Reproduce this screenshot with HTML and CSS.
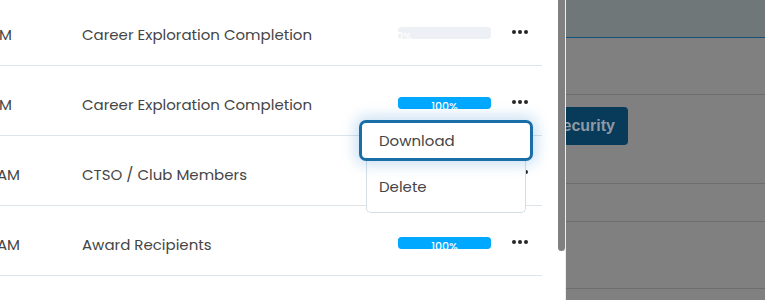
FILE: index.html
```html
<!DOCTYPE html>
<html lang="en">
<head>
    <meta charset="UTF-8">
    <meta name="viewport" content="width=device-width, initial-scale=1.0">
    <title>Reports</title>
    <link rel="stylesheet" href="styles.css">
</head>
<body>
    <div class="screen">
        <div class="panel">
            <div class="panel-body">
                <div class="table">
                    <div class="row">
                        <div class="when"><span>10/14/2024 04:12 PM</span></div>
                        <div class="name">Career Exploration Completion</div>
                        <div class="progress"><div class="fill empty" style="width: 0%"><span>0%</span></div></div>
                        <div class="more"><i></i><i></i><i></i></div>
                    </div>
                    <div class="row">
                        <div class="when"><span>10/14/2024 03:58 PM</span></div>
                        <div class="name">Career Exploration Completion</div>
                        <div class="progress"><div class="fill" style="width: 100%"><span>100%</span></div></div>
                        <div class="more"><i></i><i></i><i></i></div>
                    </div>
                    <div class="row">
                        <div class="when wide"><span>10/11/2024 11:20 AM</span></div>
                        <div class="name">CTSO / Club Members</div>
                        <div class="progress hidden"></div>
                        <div class="more"><i></i><i></i><i></i></div>
                    </div>
                    <div class="row">
                        <div class="when wide"><span>10/09/2024 09:45 AM</span></div>
                        <div class="name">Award Recipients</div>
                        <div class="progress"><div class="fill" style="width: 100%"><span>100%</span></div></div>
                        <div class="more"><i></i><i></i><i></i></div>
                    </div>
                </div>

                <div class="menu">
                    <div class="menu-item active">Download</div>
                    <div class="menu-item">Delete</div>
                </div>
            </div>
            <div class="scrollbar"><div class="thumb"></div></div>
        </div>

        <div class="backdrop">
            <div class="bd-header"></div>
            <div class="bd-row tall"></div>
            <div class="bd-row action"><button class="security">Security</button></div>
            <div class="bd-row short"></div>
            <div class="bd-row tall2"></div>
            <div class="bd-row"></div>
        </div>
    </div>
</body>
</html>
```

FILE: styles.css
```css
html, body {
    margin: 0;
    height: 100%;
    overflow: hidden;
}
body {
    font-family: "Poppins", "Open Sans", sans-serif;
    color: #454545;
    background: #808080;
}
.screen {
    display: flex;
    height: 300px;
}
.panel {
    width: 565px;
    flex: none;
    display: flex;
    background: #fff;
    border-right: 1px solid #e8eef3;
}
.panel-body {
    position: relative;
    flex: 1;
}
.table {
    width: 542px;
    margin-top: -4px;
}
.row {
    display: flex;
    align-items: center;
    height: 61px;
    padding-top: 8px;
    border-bottom: 1px solid #dde5eb;
    font-size: 15px;
}
.when {
    width: 12px;
    display: flex;
    justify-content: flex-end;
    white-space: nowrap;
}
.when.wide {
    width: 20px;
}
.name {
    margin-left: 70px;
    width: 316px;
    white-space: nowrap;
}
.when.wide + .name {
    margin-left: 62px;
}
.progress {
    width: 93px;
    height: 12px;
    margin-top: -3px;
    border-radius: 3px;
    background: #edf1f5;
    overflow: hidden;
}
.progress.hidden {
    visibility: hidden;
}
.fill {
    height: 100%;
    background: #00a8ff;
    border-radius: 3px;
    display: flex;
    justify-content: center;
}
.fill.empty {
    justify-content: flex-start;
}
.fill span {
    color: #fff;
    font-size: 11px;
    font-weight: 500;
    line-height: 18px;
    white-space: nowrap;
}
.fill.empty span {
    margin-left: -2px;
}
.more {
    margin-left: 21px;
    display: flex;
    gap: 2px;
    margin-top: -5px;
}
.more i {
    width: 4px;
    height: 4px;
    border-radius: 50%;
    background: #262626;
}
.menu {
    position: absolute;
    left: 366px;
    top: 120px;
    width: 158px;
    background: #fff;
    border: 1px solid #d6dee4;
    border-top: none;
    border-radius: 0 0 5px 5px;
}
.menu-item {
    font-size: 15px;
    padding-left: 12px;
    height: 51px;
    display: flex;
    align-items: center;
}
.menu-item.active {
    height: 35px;
    margin: 0 -8px 0 -8px;
    padding-left: 17px;
    border: 3px solid #1a6ea8;
    border-radius: 7px;
    background: #fff;
    box-shadow: 0 0 14px 4px rgba(20, 120, 200, 0.22);
}
.scrollbar {
    width: 7px;
    flex: none;
}
.thumb {
    height: 251px;
    background: #808080;
    border-radius: 0 0 4px 4px;
}
.backdrop {
    flex: 1;
    overflow: hidden;
}
.bd-header {
    height: 37px;
    background: #6f7779;
    border-bottom: 1px solid #12527a;
}
.bd-row {
    border-bottom: 1px solid #6d6d6d;
    height: 65px;
}
.bd-row.tall {
    height: 56px;
}
.bd-row.action {
    height: 88px;
    display: flex;
    align-items: flex-start;
}
.bd-row.short {
    height: 37px;
}
.bd-row.tall2 {
    height: 66px;
}
.security {
    margin: 12px 0 0 -26px;
    height: 38px;
    width: 88px;
    border: none;
    border-radius: 4px;
    background: #083a5a;
    color: #8e9aa3;
    font-family: "Liberation Sans", Arial, sans-serif;
    font-weight: bold;
    font-size: 16px;
    text-align: right;
    padding: 0 13px 0 0;
}
```
